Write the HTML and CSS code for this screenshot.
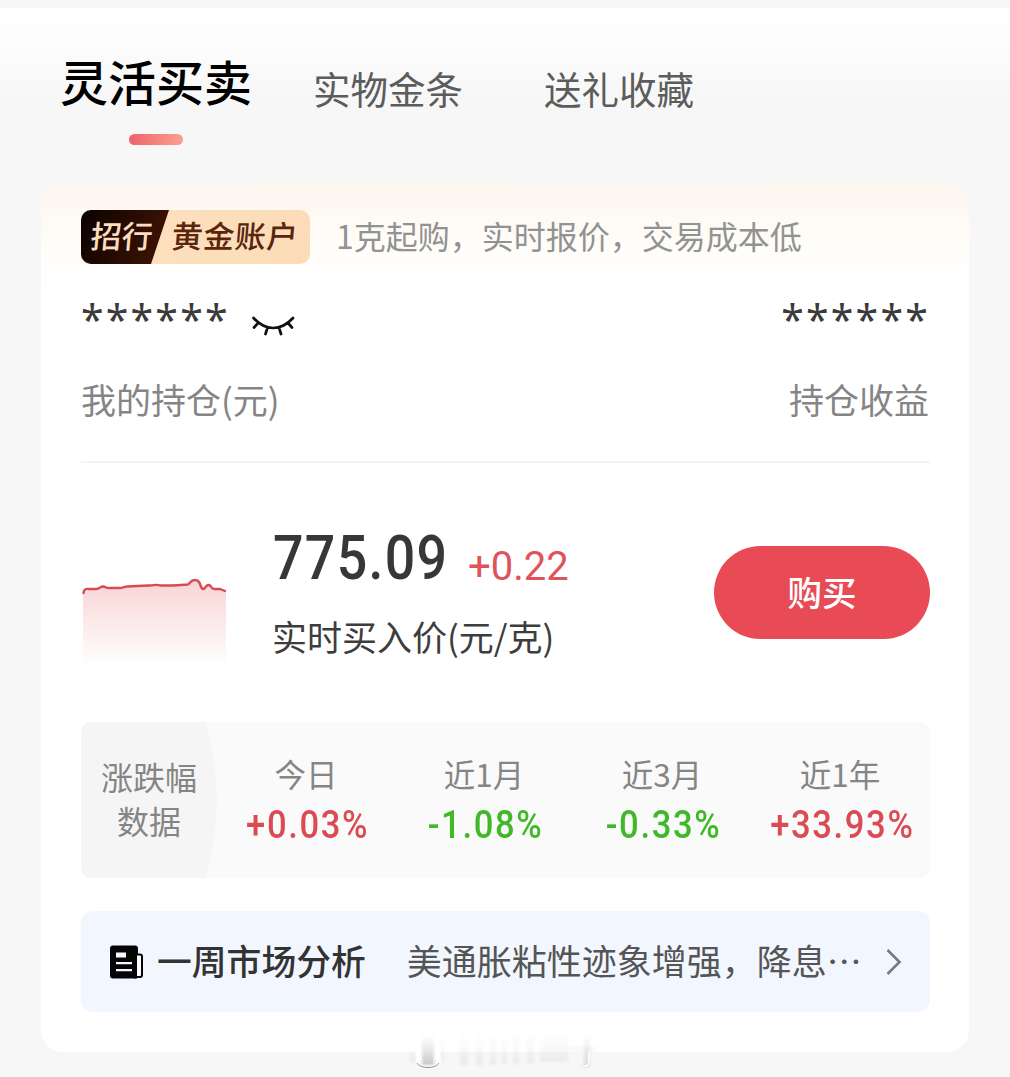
FILE: index.html
```html
<!DOCTYPE html>
<html lang="zh-CN">
<head>
<meta charset="utf-8">
<title>黄金账户</title>
<link rel="stylesheet" href="styles.css">
</head>
<body>
<div class="page">
  <nav class="tabs">
    <div class="tab tab-active">灵活买卖<span class="tab-bar"></span></div>
    <div class="tab">实物金条</div>
    <div class="tab">送礼收藏</div>
  </nav>

  <main class="card">
    <header class="account">
      <div class="badge">
        <span class="badge-bank"><span class="slant">招行</span></span>
        <span class="badge-name"><span class="slant">黄金账户</span></span>
      </div>
      <p class="account-desc">1克起购，实时报价，交易成本低</p>
    </header>

    <section class="holding">
      <div class="holding-values">
        <span class="mask">******</span>
        <svg class="eye" width="46" height="24" viewBox="0 0 46 24" fill="none" stroke="#111" stroke-width="2.7" stroke-linecap="round">
          <path d="M3.500 4C9 10 16 14 23 14S37.500 10 43 4M8 9L4 13.500M17.500 13.500L15.500 20M29 13.500L31 20M38 9L42 13.500"/>
        </svg>
        <span class="mask mask-right">******</span>
      </div>
      <div class="holding-labels">
        <span>我的持仓(元)</span>
        <span>持仓收益</span>
      </div>
    </section>

    <section class="quote">
      <svg class="spark" width="146" height="92" viewBox="0 0 146 92">
        <defs>
          <linearGradient id="fade" x1="0" y1="0" x2="0" y2="1">
            <stop offset="0" stop-color="#f8d3d4"/>
            <stop offset="1" stop-color="#fff"/>
          </linearGradient>
        </defs>
        <path fill="url(#fade)" d="M1 17L5 14L18 13L22 11L28 13H38L44 11L68 10L75 9L80 10L104 9L110 4L117 5L122 13L127 10L132 14L144 16V90H1Z"/>
        <path fill="none" stroke="#d84b50" stroke-width="2.400" stroke-linejoin="round" stroke-linecap="round" d="M1.500 18C2 14 4 13.500 7 14H14C18 14 18 11.500 21 11.500C24 11.500 23 13 27 13H38C42 13 41 11.500 45 11.500L66 10.500C72 11 73 9 77 10.200C88 11.200 96 10 106 9.500C109 8 108 5 113 5C120 5 117 13 121 14C124 14 123 9.500 127 10C130 11 129 14 132 14H138L143 16"/>
      </svg>
      <div class="price">
        <div class="price-line"><span class="price-now">775.09</span><span class="price-change">+0.22</span></div>
        <div class="price-label">实时买入价(元/克)</div>
      </div>
      <button class="buy">购买</button>
    </section>

    <section class="stats">
      <div class="stats-title">
        <svg class="stats-shape" width="138" height="156" viewBox="0 0 138 156"><path fill="#f5f5f5" d="M0 0H124Q148 78 124 156H0Z"/></svg>
        <span>涨跌幅</span><span>数据</span>
      </div>
      <div class="stat"><span class="stat-name">今日</span><span class="stat-value up">+0.03%</span></div>
      <div class="stat"><span class="stat-name">近1月</span><span class="stat-value down">-1.08%</span></div>
      <div class="stat"><span class="stat-name">近3月</span><span class="stat-value down">-0.33%</span></div>
      <div class="stat"><span class="stat-name">近1年</span><span class="stat-value up">+33.93%</span></div>
    </section>

    <section class="news">
      <svg class="news-icon" width="34" height="34" viewBox="0 0 34 34">
        <rect x="0" y="0.500" width="28" height="33" rx="3" fill="#050507"/>
        <path d="M26 9.500H30Q32 9.500 32 11.500V30Q32 32 30 32H26Z" fill="#fff" stroke="#050507" stroke-width="2"/>
        <path d="M24 8H27V33.500H24Z" fill="#050507"/>
        <path d="M6 7.500H16V12.500H6ZM6 17H22V19.200H6ZM6 24H22V26.200H6Z" fill="#f3f7ff"/>
      </svg>
      <span class="news-title">一周市场分析</span>
      <span class="news-text">美通胀粘性迹象增强，降息<span class="dots">⋯</span></span>
      <svg class="arrow" width="16" height="28" viewBox="0 0 16 28" fill="none" stroke="#777b82" stroke-width="2.600"><path d="M1.500 2L13.500 14L1.500 26"/></svg>
    </section>
  </main>

  <svg class="smudge" width="194" height="44" viewBox="0 0 194 44">
    <defs>
      <linearGradient id="ink" x1="0" y1="0" x2="0" y2="1">
        <stop offset="0" stop-color="#bbb" stop-opacity="0"/>
        <stop offset="1" stop-color="#aaa" stop-opacity=".65"/>
      </linearGradient>
      <filter id="soft"><feGaussianBlur stdDeviation="1.600 1"/></filter>
    </defs>
    <path d="M8 4V33Q11 39 20 39Q29 39 33 33V4Z" fill="#fff"/>
    <g fill="url(#ink)" filter="url(#soft)">
      <path d="M14 6H26V36H14Z"/>
      <path opacity=".25" d="M2 22H7V34H2ZM33 2H36V32H33ZM52 6H60V36H52ZM68 6H75V36H68ZM82 6H88V36H82ZM94 4H99V35H94ZM105 4H111V35H105ZM119 4H126V35H119ZM132 8H160V33H132ZM160 17H188V23H160Z"/>
      <path opacity=".6" d="M176 4H182V34Q182 39 174 38V35H176Z"/>
    </g>
    <path d="M9 34Q12 38.500 20 38.500T31 34" fill="none" stroke="#888" stroke-width=".9"/>
    <path d="M174 37Q180 38 181 33V22" fill="none" stroke="#fff" stroke-width="1.400"/>
  </svg>
</div>
</body>
</html>
```
FILE: styles.css
```css
* { box-sizing: border-box; }

body {
  margin: 0;
  background: #f7f7f7;
  font-family: "Noto Sans CJK SC", sans-serif;
}

.page {
  position: relative;
  width: 1010px;
  height: 1077px;
  padding-top: 8px;
  overflow: hidden;
}

.tabs {
  display: flex;
  height: 172px;
  padding-left: 60px;
  background: linear-gradient(#fff 0, #fdfdfd 30px, #f7f7f7 90px, #f7f7f7 100%);
}

.tab {
  height: 60px;
  margin-top: 50px;
  line-height: 60px;
  font-size: 37.5px;
  color: #5c5c5c;
  white-space: nowrap;
}

.tab + .tab { width: 150px; margin-right: 81px; }

.tab-active {
  display: flex;
  flex-direction: column;
  align-items: center;
  width: 192px;
  height: 96px;
  margin-top: 41px;
  margin-right: 61px;
  line-height: 62px;
  font-size: 48px;
  font-weight: 500;
  color: #000;
}

.tab-bar {
  flex: none;
  width: 54px;
  height: 11px;
  margin-top: 23px;
  border-radius: 6px;
  background: linear-gradient(90deg, #ef626c, #fba18e);
}

.card {
  width: 928px;
  height: 872px;
  margin-left: 41px;
  padding: 30px 39px 40px 40px;
  border-radius: 22px;
  background: linear-gradient(#fbf6f1 0, #fdf8f1 25px, #fffdf9 65px, #fff 105px);
}

.account { display: flex; height: 54px; }

.badge {
  display: flex;
  width: 229px;
  height: 54px;
  border-radius: 10px;
  background: linear-gradient(90deg, #fee1c0, #fcdcb8);
  overflow: hidden;
  line-height: 50px;
  font-size: 31px;
  font-weight: 500;
}

.badge-bank {
  width: 88px;
  padding-left: 10px;
  background: linear-gradient(110deg, #0c0200, #431504);
  clip-path: polygon(0 0, 100% 0, 70px 100%, 0 100%);
  color: #fbdcbf;
}

.badge-name { padding-left: 3px; letter-spacing: .6px; color: #5b250d; }

.slant { display: inline-block; transform: skewX(-5deg); }

.account-desc {
  margin: 0 0 0 26px;
  line-height: 50px;
  font-size: 32px;
  color: #929292;
  white-space: nowrap;
}

.holding { height: 199px; padding-top: 25px; border-bottom: 2px solid #f4f4f4; }

.holding-values { display: flex; height: 60px; }

.mask {
  line-height: 60px;
  font-family: "Noto Sans", sans-serif;
  font-size: 41px;
  letter-spacing: 2.2px;
  color: #3b3b3b;
}

.mask-right { margin-left: auto; }

.eye { margin: 25px 0 0 20px; }

.holding-labels {
  display: flex;
  justify-content: space-between;
  margin: 30px 1px 0 0;
  line-height: 40px;
  font-size: 35px;
  color: #858585;
}

.quote { display: flex; height: 259px; }

.spark { margin: 112px 0 0 1px; }

.price { margin: 65px 0 0 44px; width: 390px; }

.price-line { display: flex; height: 60px; font-family: Roboto, sans-serif; white-space: nowrap; }

.price-now {
  width: 196px;
  margin-left: 1px;
  margin-right: -1px;
  line-height: 60px;
  font-size: 61px;
  font-weight: 500;
  letter-spacing: 1.5px;
  color: #373737;
  transform: scaleX(.88);
  transform-origin: left;
}

.price-change { line-height: 78px; font-size: 40px; color: #df535b; }

.price-label {
  margin-top: 28px;
  line-height: 40px;
  font-size: 35px;
  color: #3d3d3d;
  white-space: nowrap;
}

.buy {
  width: 216px;
  height: 93px;
  margin: 83px 0 0 auto;
  padding: 0 0 4px;
  border: 0;
  border-radius: 47px;
  background: #e84b56;
  font: 500 34.5px "Noto Sans CJK SC", sans-serif;
  color: #fff;
}

.stats {
  display: flex;
  height: 156px;
  border-radius: 10px;
  background: #fafafa;
  overflow: hidden;
}

.stats-title {
  position: relative;
  display: flex;
  flex-direction: column;
  align-items: center;
  width: 136px;
  padding-top: 32px;
  line-height: 44px;
  font-size: 32px;
  color: #858585;
}

.stats-title span { position: relative; }

.stats-shape { position: absolute; left: 0; top: 0; }

.stat { display: flex; flex-direction: column; align-items: center; width: 178px; }

.stat-name { margin-top: 31px; line-height: 40px; font-size: 31.5px; color: #858585; }

.stat-value {
  margin-top: 10px;
  line-height: 44px;
  font-family: Roboto, sans-serif;
  font-size: 38px;
  font-weight: 500;
  letter-spacing: 1.8px;
  margin-right: -4px;
  transform: scaleX(.91);
}

.up { color: #d94c54; }
.down { color: #3fb927; }

.news {
  display: flex;
  align-items: center;
  height: 101px;
  margin-top: 33px;
  padding-left: 29px;
  border-radius: 12px;
  background: #f2f7ff;
  font-size: 34.8px;
  line-height: 98px;
  white-space: nowrap;
}

.news-title { margin-left: 13px; padding-bottom: 3px; font-weight: 500; color: #333; }

.news-text { width: 456px; margin-left: 41px; padding-bottom: 3px; font-size: 35px; color: #555; }

.arrow { margin-left: 23px; }

.smudge { position: absolute; left: 408px; top: 1029px; }
```
